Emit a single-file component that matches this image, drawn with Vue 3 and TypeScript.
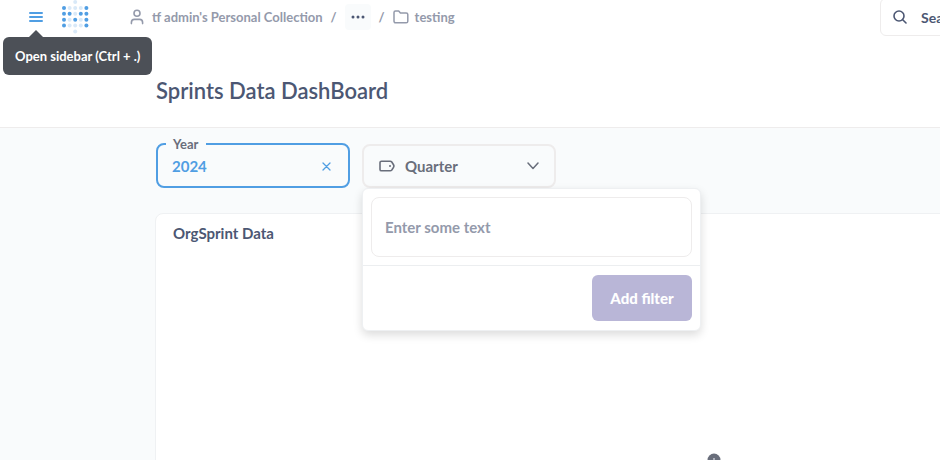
<script setup lang="ts">
import { computed, ref } from 'vue'

interface Dot {
  x: number
  y: number
  solid: boolean
}

const logoRows: string[] = ['  o  ', 'xooox', 'xxoxx', 'xoxox', 'xooox', '  o  ']

const dots = computed<Dot[]>(() =>
  logoRows.flatMap((row, r) =>
    [...row].flatMap((cell, c) =>
      cell === ' ' ? [] : [{ x: 3 + c * 5.6, y: 3 + r * 5.9, solid: cell === 'x' }],
    ),
  ),
)

const year = ref<string>('2024')
const quarter = ref<string>('')
</script>

<template>
  <div class="page">
    <header class="header">
      <nav class="nav">
        <div class="toggle-wrap">
          <button class="icon-button toggle" type="button" aria-label="Open sidebar">
            <svg width="14" height="12" viewBox="0 0 14 12">
              <path d="M1 2h12M1 6h12M1 10h12" stroke="#509ee3" stroke-width="2" stroke-linecap="round" />
            </svg>
          </button>
          <div class="tooltip" role="tooltip">Open sidebar (Ctrl + .)</div>
        </div>
        <a class="logo" href="#" aria-label="Home">
          <svg width="29" height="36" viewBox="0 0 29 36">
            <circle
              v-for="(dot, i) in dots"
              :key="i"
              :cx="dot.x"
              :cy="dot.y"
              r="2"
              :fill="dot.solid ? '#509ee3' : '#d9e9f8'"
            />
          </svg>
        </a>
        <div class="crumbs">
          <a class="crumb" href="#">
            <svg width="14" height="16" viewBox="0 0 14 16" fill="none" stroke="#949aab" stroke-width="1.6" stroke-linecap="round">
              <circle cx="7" cy="4.2" r="3" />
              <path d="M1.4 14.6v-1.2a3 3 0 0 1 3-3h5.2a3 3 0 0 1 3 3v1.2" />
            </svg>
            <span>tf admin's Personal Collection</span>
          </a>
          <span class="slash">/</span>
          <button class="icon-button more" type="button" aria-label="Show more">
            <svg width="14" height="4" viewBox="0 0 14 4" fill="#4c5773">
              <circle cx="2" cy="2" r="1.5" />
              <circle cx="7" cy="2" r="1.5" />
              <circle cx="12" cy="2" r="1.5" />
            </svg>
          </button>
          <span class="slash">/</span>
          <a class="crumb folder" href="#">
            <svg width="16" height="14" viewBox="0 0 16 14" fill="none" stroke="#949aab" stroke-width="1.5" stroke-linejoin="round">
              <path d="M1 2.5A1.5 1.5 0 0 1 2.5 1h3.2l1.7 2h5.8A1.6 1.6 0 0 1 14.8 4.6v6.6a1.6 1.6 0 0 1-1.6 1.6H2.5A1.5 1.5 0 0 1 1 11.3z" />
            </svg>
            <span>testing</span>
          </a>
        </div>
        <button class="search" type="button">
          <svg width="14" height="14" viewBox="0 0 14 14" fill="none" stroke="#4c5773" stroke-width="1.6" stroke-linecap="round">
            <circle cx="6" cy="6" r="5" />
            <path d="M9.7 9.7L13 13" />
          </svg>
          <span>Search</span>
        </button>
      </nav>
      <h1 class="title">Sprints Data DashBoard</h1>
    </header>

    <main class="main">
      <div class="filters">
        <fieldset class="filter active">
          <legend>Year</legend>
          <div class="filter-row">
            <span class="value">{{ year }}</span>
            <button class="icon-button" type="button" aria-label="Clear year">
              <svg width="9" height="9" viewBox="0 0 9 9">
                <path d="M1 1l7 7M8 1l-7 7" stroke="#509ee3" stroke-width="1.3" stroke-linecap="round" />
              </svg>
            </button>
          </div>
        </fieldset>

        <div class="filter-wrap">
          <button class="filter idle" type="button" aria-expanded="true">
            <svg width="16" height="12" viewBox="0 0 16 12" fill="none" stroke="#696e7b" stroke-width="1.6" stroke-linejoin="round">
              <path d="M2.5 1.2h8.7c.7 0 1.2.3 1.6.8l1.7 2.7c.5.8.5 1.8 0 2.6L12.8 10c-.4.5-.9.8-1.600.8H2.500c-.9 0-1.500-.6-1.500-1.400V2.600c0-.8.6-1.400 1.500-1.400z" />
              <circle cx="11" cy="6" r="1" fill="#696e7b" stroke="none" />
            </svg>
            <span class="label">Quarter</span>
            <svg width="12" height="8" viewBox="0 0 12 8" fill="none" stroke="#696e7b" stroke-width="1.5" stroke-linecap="round" stroke-linejoin="round">
              <path d="M1 1l5 5.5L11 1" />
            </svg>
          </button>
          <form class="popover" @submit.prevent>
            <div class="field">
              <input v-model="quarter" type="text" aria-label="Quarter" placeholder="Enter some text" />
            </div>
            <div class="actions">
              <button class="add" type="submit" :disabled="!quarter">Add filter</button>
            </div>
          </form>
        </div>
      </div>

      <section class="card">
        <h2>OrgSprint Data</h2>
        <div class="card-body">
          <svg width="14" height="14" viewBox="0 0 14 14">
            <circle cx="7" cy="7" r="6.5" fill="#696e7b" />
            <circle cx="7" cy="6" r="1" fill="#c4c8d0" />
          </svg>
        </div>
      </section>
    </main>
  </div>
</template>

<style>
body {
  overflow: hidden;
}
</style>

<style scoped>
.page {
  display: flex;
  flex-direction: column;
  height: 100vh;
  overflow: hidden;
  background: #f9fbfc;
  color: #4c5773;
  font-family: Lato, "Liberation Sans", sans-serif;
  font-weight: 700;
}

.page * {
  box-sizing: border-box;
}

.page svg {
  display: block;
  flex-shrink: 0;
}

button,
input {
  font: inherit;
  color: inherit;
}

a {
  color: inherit;
  text-decoration: none;
}

.icon-button {
  display: flex;
  align-items: center;
  justify-content: center;
  padding: 0;
  border: 0;
  background: transparent;
}

.header {
  flex-shrink: 0;
  height: 128px;
  background: #fff;
  border-bottom: 1px solid #eeecec;
}

.nav {
  display: flex;
  align-items: center;
  height: 34px;
  padding-left: 24px;
}

.toggle-wrap {
  position: relative;
}

.toggle {
  width: 24px;
  height: 24px;
}

.tooltip {
  position: absolute;
  z-index: 3;
  top: 32px;
  left: -21px;
  padding: 0 12px;
  border-radius: 6px;
  background: #4c5057;
  color: #fff;
  font-size: 13px;
  line-height: 38px;
  white-space: nowrap;
}

.tooltip::before {
  content: "";
  position: absolute;
  top: -7px;
  left: 26px;
  border: 7px solid transparent;
  border-top: 0;
  border-bottom-color: #4c5057;
}

.logo {
  margin-left: 13px;
}

.crumbs {
  display: flex;
  align-items: center;
  margin-left: 40px;
  color: #949aab;
  font-size: 13px;
  line-height: 16px;
  white-space: nowrap;
}

.crumb {
  display: flex;
  align-items: center;
  gap: 8px;
}

.slash {
  width: 22px;
  text-align: center;
}

.more {
  width: 26px;
  height: 26px;
  border-radius: 4px;
  background: #f9fbfc;
}

.folder {
  gap: 6px;
}

.search {
  display: flex;
  flex-shrink: 0;
  align-items: center;
  gap: 14px;
  width: 240px;
  height: 38px;
  margin-left: auto;
  margin-right: -180px;
  padding: 0 12px;
  border: 1px solid #eeecec;
  border-radius: 6px;
  background: #fff;
  font-size: 14px;
}

.title {
  margin: 42px 156px 0;
  font-size: 22px;
  line-height: 30px;
  font-weight: 600;
}

.main {
  display: flex;
  flex: 1;
  flex-direction: column;
  min-height: 0;
  padding-left: 155px;
}

.filters {
  display: flex;
  align-items: flex-end;
  gap: 12px;
  height: 60px;
  flex-shrink: 0;
  padding-left: 1px;
  font-size: 15px;
}

.filter {
  width: 194px;
  margin: 0;
  border: 2px solid #eeecec;
  border-radius: 8px;
}

.active {
  height: 53px;
  padding: 0 17px 0 8px;
  border-color: #509ee3;
  color: #509ee3;
}

.active legend {
  padding: 0 8px 0 7px;
  color: #696e7b;
  font-size: 13px;
  line-height: 18px;
}

.filter-row {
  display: flex;
  align-items: center;
  justify-content: space-between;
  height: 26px;
  padding-left: 6px;
}

.filter-wrap {
  position: relative;
}

.idle {
  display: flex;
  align-items: center;
  height: 44px;
  padding: 0 15px;
  background: #f9fbfc;
  color: #696e7b;
}

.label {
  flex: 1;
  margin-left: 10px;
  text-align: left;
}

.popover {
  position: absolute;
  z-index: 2;
  top: 100%;
  left: 0;
  width: 339px;
  border: 1px solid #eef0f2;
  border-radius: 6px;
  background: #fff;
  box-shadow: 0 4px 10px rgba(0, 0, 0, 0.14);
}

.field {
  padding: 8px;
  border-bottom: 1px solid #eceef0;
}

.field input {
  display: block;
  width: 100%;
  height: 60px;
  padding: 0 13px;
  border: 1px solid #eeecec;
  border-radius: 8px;
  outline: 0;
  background: #fff;
}

.field input::placeholder {
  color: #949aab;
  opacity: 1;
}

.actions {
  display: flex;
  justify-content: flex-end;
  padding: 9px 8px;
}

.add {
  width: 100px;
  height: 46px;
  padding: 0;
  border: 0;
  border-radius: 6px;
  background: #b9b6d7;
  color: #fff;
  font-weight: 900;
}

.card {
  flex: 1 0 auto;
  min-width: 1118px;
  margin-top: 25px;
  padding: 9px 17px;
  border: 1px solid #eff1f3;
  border-radius: 8px;
  background: #fff;
}

.card h2 {
  margin: 0;
  font-size: 15px;
  line-height: 20px;
}

.card-body {
  display: flex;
  justify-content: center;
  padding-top: 210px;
}
</style>
